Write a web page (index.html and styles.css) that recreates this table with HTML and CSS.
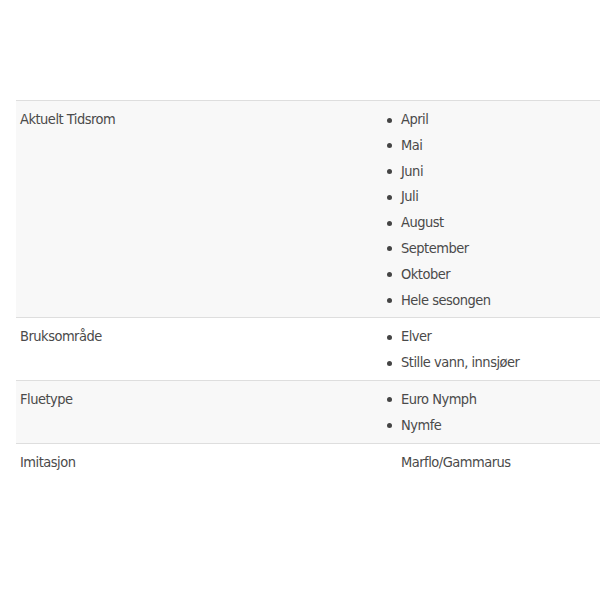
FILE: index.html
```html
<!DOCTYPE html>
<html lang="no">
<head>
<meta charset="utf-8">
<title>Egenskaper</title>
<link rel="stylesheet" href="styles.css">
</head>
<body>
<div class="specs">
  <div class="row shaded">
    <div class="label">Aktuelt Tidsrom</div>
    <div class="value">
      <ul>
        <li>April</li>
        <li>Mai</li>
        <li>Juni</li>
        <li>Juli</li>
        <li>August</li>
        <li>September</li>
        <li>Oktober</li>
        <li>Hele sesongen</li>
      </ul>
    </div>
  </div>
  <div class="row">
    <div class="label">Bruksområde</div>
    <div class="value">
      <ul>
        <li>Elver</li>
        <li>Stille vann, innsjøer</li>
      </ul>
    </div>
  </div>
  <div class="row shaded">
    <div class="label">Fluetype</div>
    <div class="value">
      <ul>
        <li>Euro Nymph</li>
        <li>Nymfe</li>
      </ul>
    </div>
  </div>
  <div class="row last">
    <div class="label">Imitasjon</div>
    <div class="value">
      <div class="plain">Marflo/Gammarus</div>
    </div>
  </div>
</div>
</body>
</html>
```
FILE: styles.css
```css
html, body {
  margin: 0;
  padding: 0;
  background: #ffffff;
}
body {
  font-family: "DejaVu Sans Condensed", "Liberation Sans Narrow", sans-serif;
  font-stretch: condensed;
  font-size: 14.5px;
  letter-spacing: -0.5px;
  color: #4a4a4a;
  padding-top: 100px;
}
.specs {
  margin-left: 16px;
}
.row {
  display: grid;
  grid-template-columns: 369px 1fr;
  border-top: 1px solid #dedede;
  line-height: 25.8px;
}
.row.shaded {
  background: #f8f8f8;
}
.label {
  padding: 6px 4px 4px;
}
.value {
  padding: 6px 0 4px;
}
ul {
  margin: 0;
  padding-left: 16px;
  list-style: none;
}
li::before {
  content: "";
  display: inline-block;
  width: 5px;
  height: 5px;
  border-radius: 50%;
  background: #444444;
  margin-left: -14px;
  margin-right: 9px;
  vertical-align: middle;
}
.plain {
  padding-left: 16px;
}
```
